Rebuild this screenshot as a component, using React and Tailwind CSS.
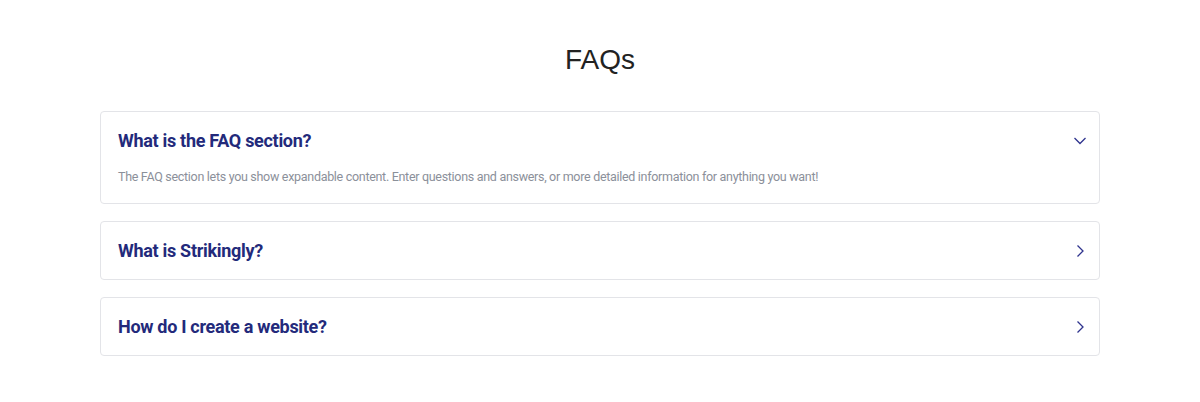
import { useState } from 'react'

const faqs = [
  {
    q: 'What is the FAQ section?',
    a: 'The FAQ section lets you show expandable content. Enter questions and answers, or more detailed information for anything you want!',
  },
  { q: 'What is Strikingly?', a: 'Strikingly is a website builder.' },
  { q: 'How do I create a website?', a: 'Sign up and pick a template.' },
]

function Chevron({ open }) {
  return (
    <svg width="14" height="14" viewBox="0 0 14 14" fill="none" className="shrink-0">
      {open ? (
        <path d="M1.5 4 L7 9.5 L12.5 4" stroke="#2f348e" strokeWidth="1.3" />
      ) : (
        <path d="M4.5 1.5 L10 7 L4.5 12.5" stroke="#2f348e" strokeWidth="1.3" />
      )}
    </svg>
  )
}

export default function App() {
  const [open, setOpen] = useState(0)

  return (
    <div className="min-h-[402px] bg-white pt-[42px] font-['Roboto',sans-serif]">
      <h1 className="text-center text-[28px] leading-[36px] text-[#222] font-['Liberation_Sans',sans-serif] font-normal">FAQs</h1>
      <div className="mx-auto mt-[33px] w-[1000px] space-y-[17px]">
        {faqs.map((f, i) => (
          <div key={f.q} className="rounded-[4px] border border-[#e3e4e8] bg-white">
            <button
              onClick={() => setOpen(open === i ? -1 : i)}
              className="flex w-full items-center justify-between pl-[17px] pr-[12px] pt-[18px] pb-[17px] text-left"
            >
              <span className="text-[18px] leading-[22px] font-bold tracking-[-0.3px] text-[#232a7b]">{f.q}</span>
              <Chevron open={open === i} />
            </button>
            {open === i && (
              <p className="-mt-[1px] pb-[17px] pl-[17px] text-[12.5px] leading-[18px] tracking-[-0.3px] text-[#8b909a]">{f.a}</p>
            )}
          </div>
        ))}
      </div>
    </div>
  )
}
